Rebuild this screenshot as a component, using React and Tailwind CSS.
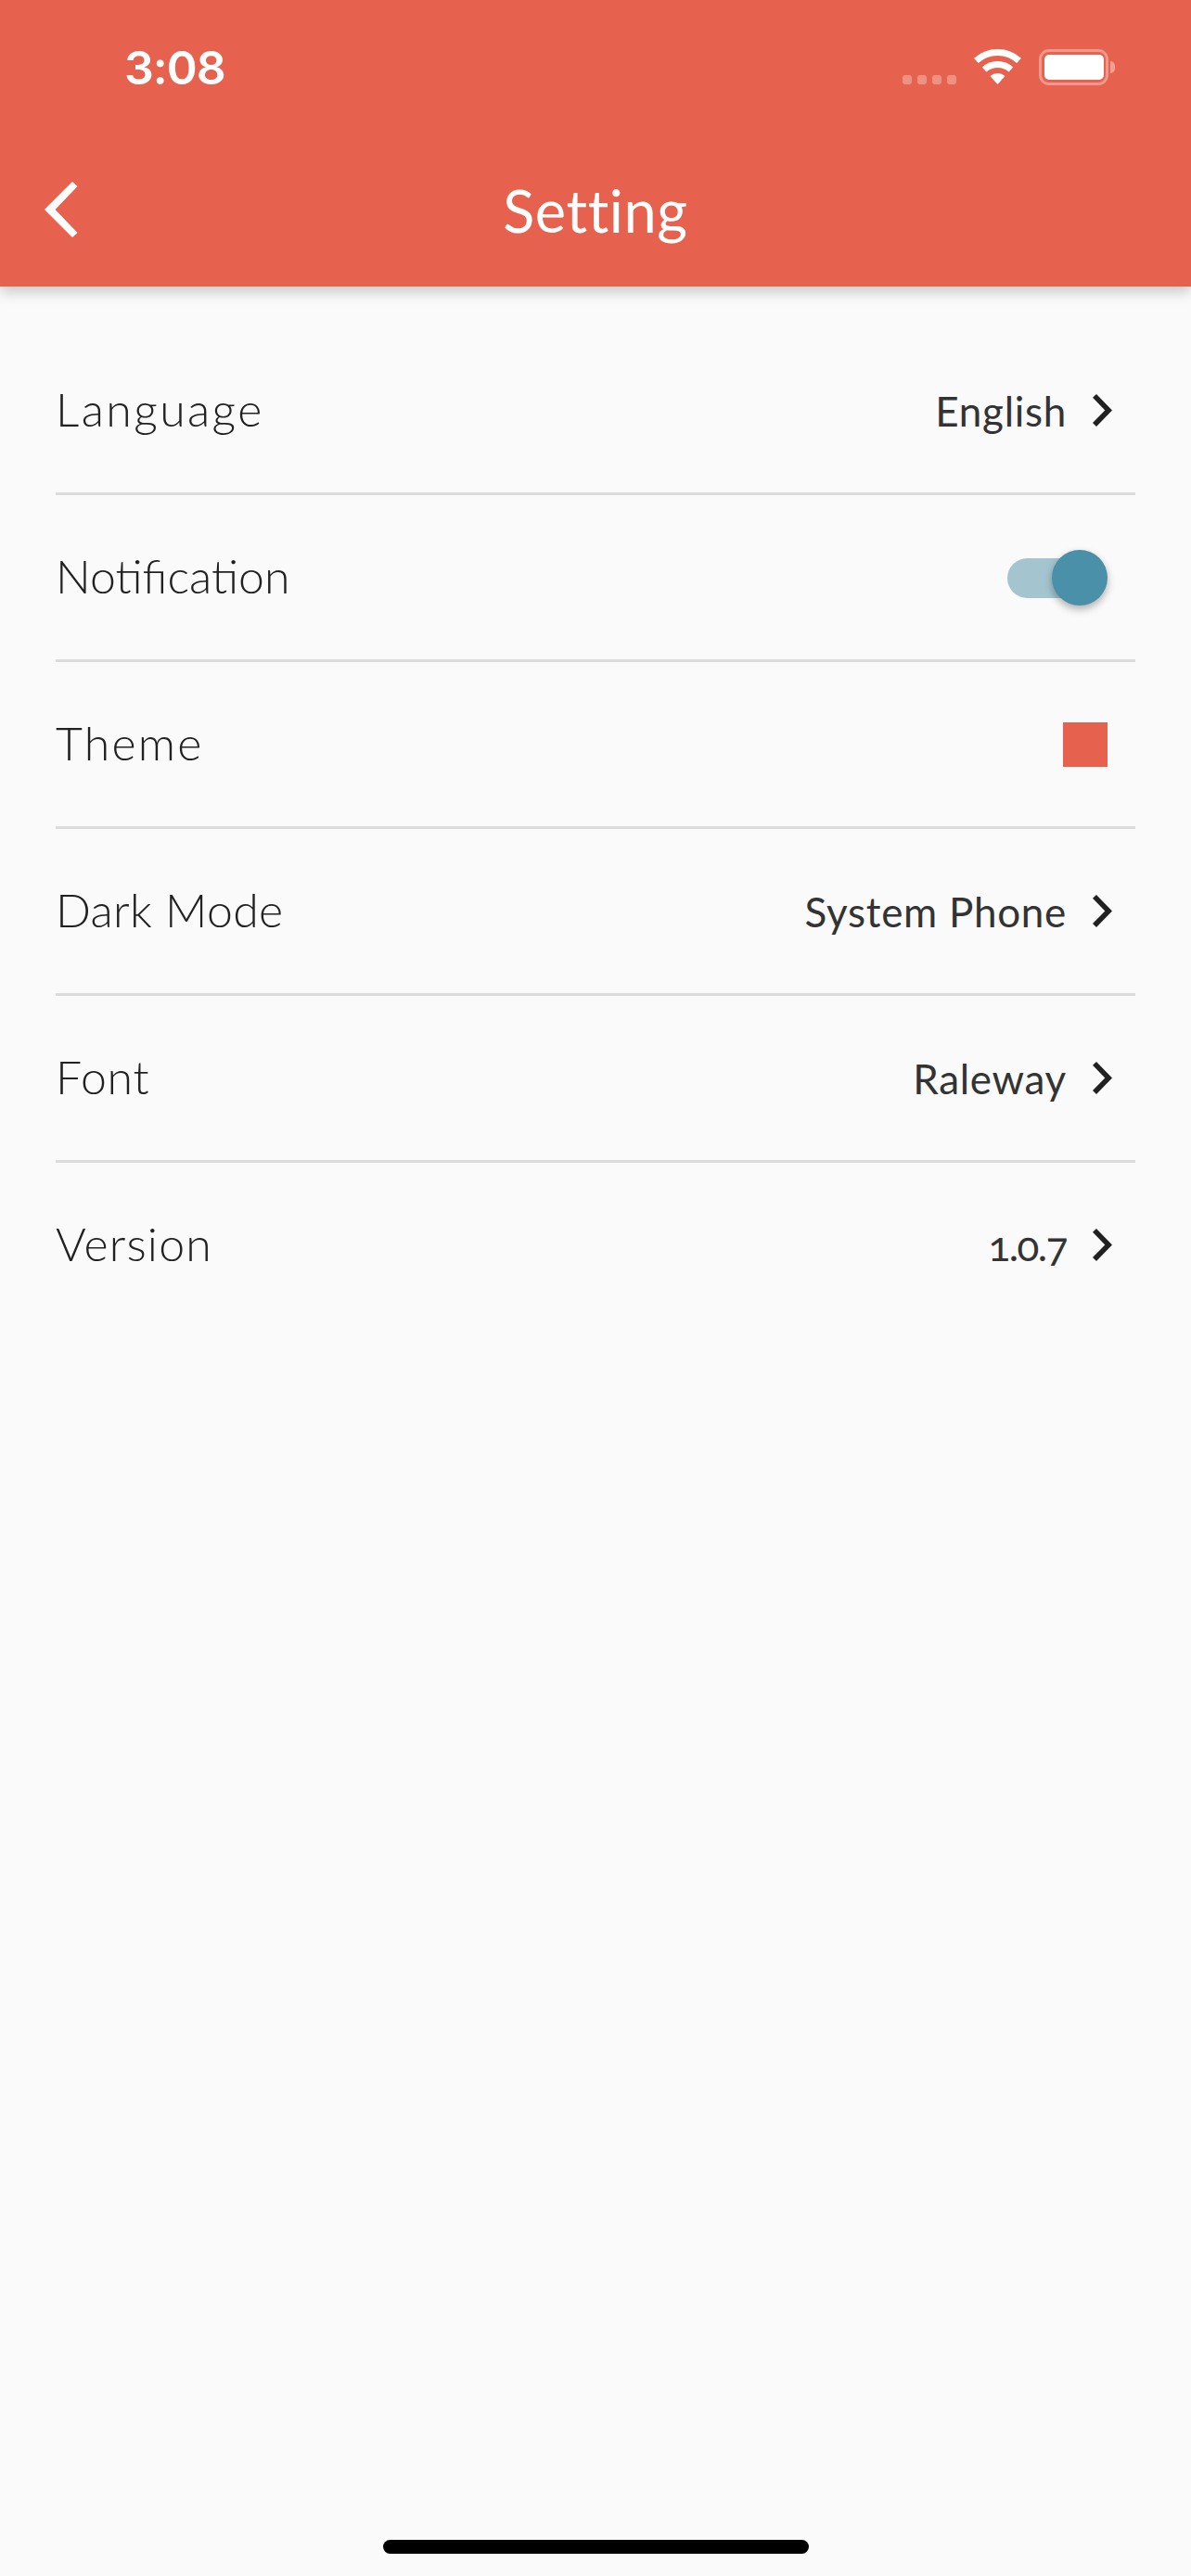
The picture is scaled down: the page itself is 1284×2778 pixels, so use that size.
import React from "react";

const Chevron = () => (
  <svg width="21" height="35" viewBox="0 0 21 35" className="block shrink-0 fill-[#212121]">
    <polygon points="0,3.7 4,0 21,17.5 4,35 0,31 13.3,17.5" />
  </svg>
);

const Value = ({ text, className = "tracking-[0.7px]" }) => (
  <div className="flex items-center gap-[28px] -mr-[5px]">
    <span className={`text-[44px] leading-[56px] font-normal text-[#333333] ${className}`}>{text}</span>
    <Chevron />
  </div>
);

const Row = ({ label, tracking, children }) => (
  <div className="flex h-[177px] items-center justify-between pr-[30px]">
    <span className={`-mt-[4px] text-[50px] leading-[64px] font-light text-[#212121] ${tracking}`}>{label}</span>
    {children}
  </div>
);

const Divider = () => <div className="h-[3px] bg-[#dcdcdc]" />;

export default function App() {
  return (
    <div className="flex min-h-[2778px] w-[1284px] flex-col bg-[#fafafa] font-['Lato','Noto_Sans',sans-serif]">
      <header className="relative z-10 h-[309px] bg-[#e6624e] text-white shadow-[0_6px_14px_rgba(0,0,0,0.2)]">
        <div className="flex h-[132px] items-start justify-between pl-[134px] pr-[82px] pt-[45px]">
          <span className="font-['Inter',sans-serif] text-[50px] leading-[56px] font-semibold tracking-[-1px]">3:08</span>
          <div className="flex items-start gap-[19px] pt-[8px]">
            <div className="mt-[28px] flex gap-[6px]">
              <span className="h-[10px] w-[10px] rounded-[3px] bg-white/30" />
              <span className="h-[10px] w-[10px] rounded-[3px] bg-white/30" />
              <span className="h-[10px] w-[10px] rounded-[3px] bg-white/30" />
              <span className="h-[10px] w-[10px] rounded-[3px] bg-white/30" />
            </div>
            <svg width="51" height="38" viewBox="0 0 51 38" className="block fill-white stroke-white">
              <path d="M2.4 12.4A34.5 34.5 0 0 1 48.6 12.4" fill="none" strokeWidth="7" />
              <path d="M11.1 22A21.5 21.5 0 0 1 39.9 22" fill="none" strokeWidth="7" />
              <path d="M25.5 38L17.5 29.1A12 12 0 0 1 33.5 29.1Z" strokeWidth="0" />
            </svg>
            <div className="flex items-center gap-[2px]">
              <div className="flex h-[39px] w-[75px] items-center justify-center rounded-[11px] border-[3px] border-white/35">
                <div className="h-[27px] w-[64px] rounded-[5px] bg-white" />
              </div>
              <span className="h-[13px] w-[5px] rounded-r-full bg-white/40" />
            </div>
          </div>
        </div>
        <div className="grid h-[177px] grid-cols-[1fr_auto_1fr] items-center pl-[48px] pt-[10px]">
          <svg width="36" height="60" viewBox="0 0 36 60" className="block fill-white">
            <polygon points="0,30 30,0 35.5,5 11.5,30 35.5,55 30,60" />
          </svg>
          <h1 className="-ml-[48px] mt-[2px] text-[63px] leading-[76px] font-normal tracking-[0.6px]">Setting</h1>
          <span />
        </div>
      </header>

      <main className="flex-1 px-[60px] pt-[45px]">
        <Row label="Language" tracking="tracking-[2.4px]"><Value text="English" /></Row>
        <Divider />
        <Row label="Notification" tracking="tracking-[0px]">
          <div className="relative h-[60px] w-[108px]">
            <div className="absolute left-0 top-[9px] h-[43px] w-[102px] rounded-full bg-[#a4c5d0]" />
            <div className="absolute right-0 top-0 h-[60px] w-[60px] rounded-full bg-[#4a90a8] shadow-[0_4px_8px_rgba(0,0,0,0.3)]" />
          </div>
        </Row>
        <Divider />
        <Row label="Theme" tracking="tracking-[2.2px]"><div className="h-[48px] w-[48px] bg-[#e6624e]" /></Row>
        <Divider />
        <Row label="Dark Mode" tracking="tracking-[0.3px]"><Value text="System Phone" /></Row>
        <Divider />
        <Row label="Font" tracking="tracking-[0.75px]"><Value text="Raleway" /></Row>
        <Divider />
        <Row label="Version" tracking="tracking-[1.2px]"><Value text="1.0.7" className="oldstyle-nums tracking-[-1.5px]" /></Row>
      </main>

      <div className="flex justify-center pb-[24px]">
        <div className="h-[15px] w-[459px] rounded-[8px] bg-black" />
      </div>
    </div>
  );
}
